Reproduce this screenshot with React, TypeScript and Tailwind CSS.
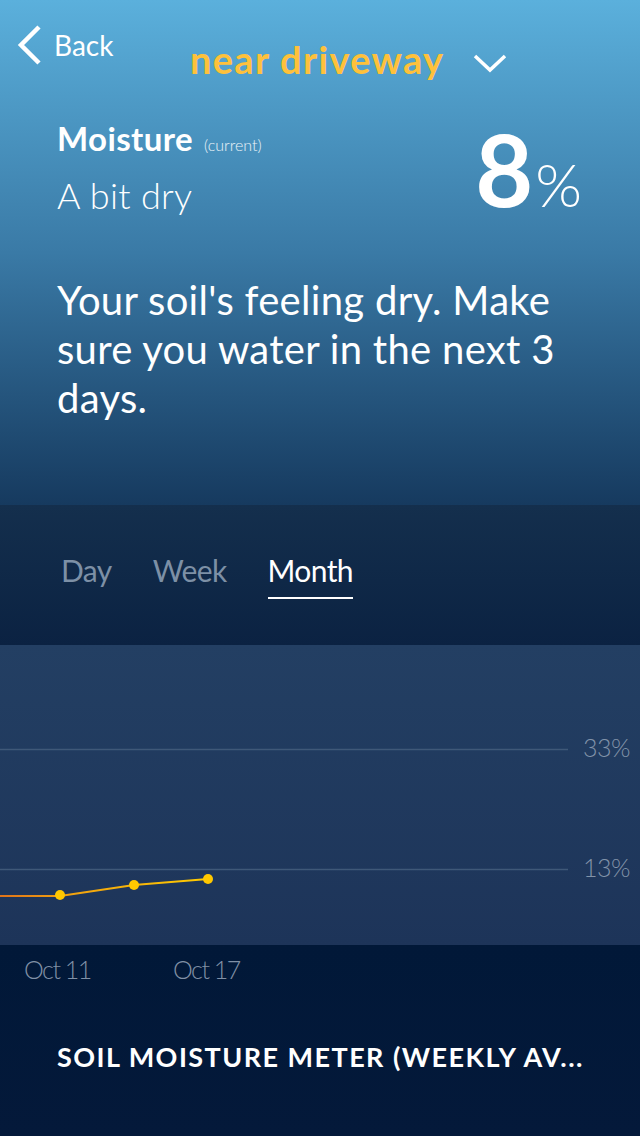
import React from "react";

export default function App() {
  const font = { fontFamily: "Lato, 'Open Sans', sans-serif" };
  return (
    <div className="w-[640px] h-[1136px] flex flex-col overflow-hidden" style={font}>
      {/* Header */}
      <div className="h-[505px] bg-gradient-to-b from-[#5bb0dc] via-[#3a7aa6] to-[#163a5f] flex flex-col">
        <div className="relative h-[100px]">
          <div className="absolute left-[15px] top-[24px] flex items-center gap-[11px]">
            <svg width="28" height="42" viewBox="0 0 28 42">
              <path d="M24 3 L6 21 L24 39" stroke="white" strokeWidth="4.5" fill="none" strokeLinecap="butt" />
            </svg>
            <span className="text-white text-[28px] font-normal leading-none">Back</span>
          </div>
          <div className="absolute left-[190px] top-[40px] flex items-center">
            <span className="text-[#fec13b] text-[38px] font-bold leading-none tracking-[1.3px]">near driveway</span>
            <svg className="ml-[29px] mt-[8px]" width="34" height="20" viewBox="0 0 34 20">
              <path d="M2 3 L17 17 L32 3" stroke="white" strokeWidth="3.5" fill="none" />
            </svg>
          </div>
        </div>
        <div className="flex justify-between pl-[57px] pr-[58px] pt-[22px]">
          <div className="flex flex-col">
            <div className="flex items-baseline">
              <span className="text-white text-[33px] font-bold leading-none tracking-[0.4px]">Moisture</span>
              <span className="text-white/90 text-[16px] font-light ml-[11px]">(current)</span>
            </div>
            <span className="text-white text-[36px] font-light leading-none mt-[20px] tracking-[0.3px]">A bit dry</span>
          </div>
          <div className="flex items-baseline -mt-[4px]">
            <span className="text-white text-[100px] font-bold leading-none tracking-[2px]">8</span>
            <span className="text-white text-[60px] font-light leading-none">%</span>
          </div>
        </div>
        <p className="text-white text-[40px] font-normal leading-[49px] pl-[57px] pr-[40px] mt-[58px] tracking-[0.3px]">
          Your soil's feeling dry. Make sure you water in the next 3 days.
        </p>
      </div>

      {/* Tabs */}
      <div className="h-[140px] bg-gradient-to-b from-[#142f4d] to-[#0b2242] flex items-start pl-[61px] pt-[50px] gap-[41px]">
        <span className="text-[#7d90a6] text-[30px] font-normal leading-none tracking-[-0.6px]">Day</span>
        <span className="text-[#7d90a6] text-[30px] font-normal leading-none tracking-[-0.6px]">Week</span>
        <div className="flex flex-col">
          <span className="text-white text-[30px] font-normal leading-none tracking-[-0.6px]">Month</span>
          <div className="h-[2px] bg-white mt-[12px] w-[85px]" />
        </div>
      </div>

      {/* Chart */}
      <div className="relative h-[300px] bg-gradient-to-b from-[#233f63] to-[#1d3459]">
        <svg className="absolute inset-0" width="640" height="300" viewBox="0 0 640 300">
          <defs>
            <linearGradient id="lg" x1="0" y1="0" x2="1" y2="0">
              <stop offset="0" stopColor="#e0731a" />
              <stop offset="0.3" stopColor="#f0a010" />
              <stop offset="1" stopColor="#ffcb00" />
            </linearGradient>
          </defs>
          <line x1="0" y1="104.5" x2="568" y2="104.5" stroke="#3f5878" strokeWidth="1.5" />
          <line x1="0" y1="224.5" x2="568" y2="224.5" stroke="#3f5878" strokeWidth="1.5" />
          <polyline points="0,251 60,251 134,240 208,234" fill="none" stroke="url(#lg)" strokeWidth="2" />
          <circle cx="60" cy="250" r="5" fill="#ffc800" />
          <circle cx="134" cy="240" r="5" fill="#ffc800" />
          <circle cx="208" cy="234" r="5" fill="#ffc800" />
        </svg>
        <span className="absolute right-[10px] top-[90px] text-[#8293a9] text-[25px] font-light leading-none tracking-[-0.5px]">33%</span>
        <span className="absolute right-[10px] top-[210px] text-[#8293a9] text-[25px] font-light leading-none tracking-[-0.5px]">13%</span>
      </div>

      {/* Bottom */}
      <div className="flex-1 bg-gradient-to-b from-[#011838] to-[#04193a] flex flex-col">
        <div className="flex pl-[24px] pt-[12px] gap-[88px]">
          <span className="text-[#8090a6] text-[25px] font-light leading-none tracking-[-1.5px] w-[61px] whitespace-nowrap">Oct 11</span>
          <span className="text-[#8090a6] text-[25px] font-light leading-none tracking-[-1.5px] whitespace-nowrap">Oct 17</span>
        </div>
        <div className="pl-[57px] mt-[61px] text-white text-[27px] font-bold leading-none tracking-[1.45px] whitespace-nowrap">
          SOIL MOISTURE METER (WEEKLY AV...
        </div>
      </div>
    </div>
  );
}
